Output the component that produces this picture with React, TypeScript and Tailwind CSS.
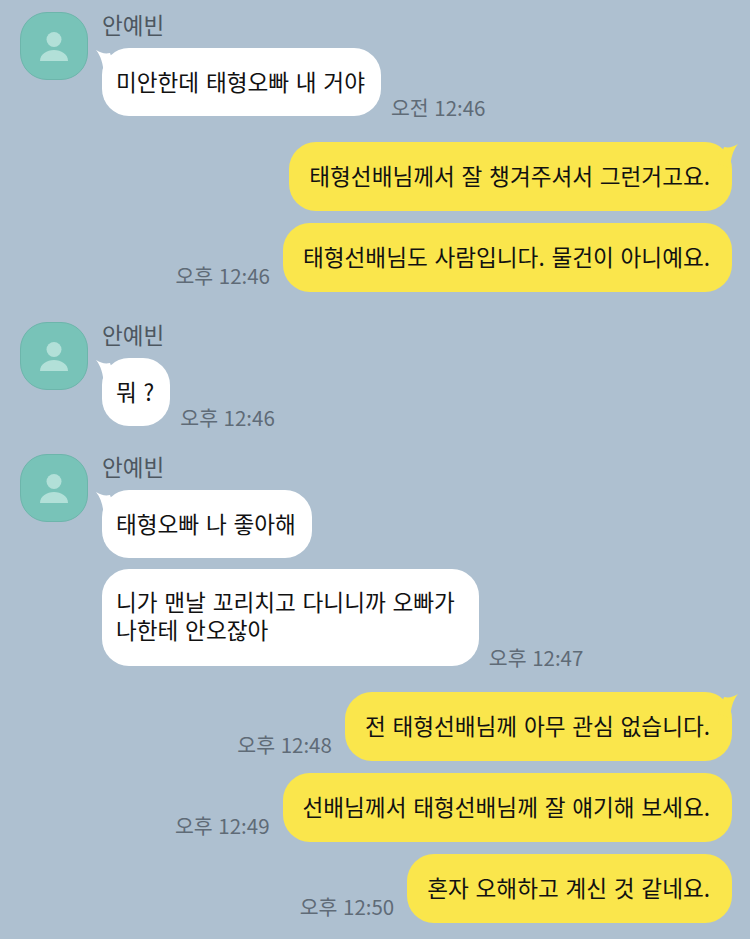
import React from 'react';

const sans = "font-['Noto_Sans_CJK_KR','Noto_Sans',sans-serif]";

function Avatar() {
  return (
    <div className="w-[68px] h-[68px] shrink-0 rounded-[27px] bg-[#78c3b8] border border-[#6db5ab] flex items-center justify-center">
      <svg width="28" height="29" viewBox="0 0 28 29">
        <circle cx="14" cy="7.5" r="7.5" fill="#b2e0d8" />
        <path d="M0 29 C0 22 7 18 14 18 C21 18 28 22 28 29 Z" fill="#b2e0d8" />
      </svg>
    </div>
  );
}

function TheirBubble({ text, time, tail, multiline, className = '' }: { text: React.ReactNode; time?: string; tail?: boolean; multiline?: boolean; className?: string }) {
  return (
    <div className={`flex items-end ${className}`}>
      <div className={`relative bg-white rounded-[27px] pl-[14px] pt-[19px] text-[22.6px] [word-spacing:1.7px] text-[#111] ${multiline ? 'pr-[24px] pb-[22px] leading-[28px]' : 'pr-[16px] pb-[20px] leading-[29px]'}`}>
        {tail && (
          <svg className="absolute left-[-6px] top-[2px]" width="24" height="24" viewBox="0 0 24 24">
            <path d="M0 0 C5 3 9 4 14 3 L20 20 L8 24 C7 14 5 6 0 0 Z" fill="#fff" />
          </svg>
        )}
        {text}
      </div>
      {time && <span className="ml-[10px] mb-[-3px] text-[20.5px] leading-[24px] [word-spacing:1px] text-[#5f6b77] whitespace-nowrap">{time}</span>}
    </div>
  );
}

function MyBubble({ text, time, tail, className = '' }: { text: string; time?: string; tail?: boolean; className?: string }) {
  return (
    <div className={`flex items-end justify-end ${className}`}>
      {time && <span className="mr-[13px] mb-[5px] text-[20.5px] leading-[24px] [word-spacing:1px] text-[#5f6b77] whitespace-nowrap">{time}</span>}
      <div className="relative bg-[#fae64c] rounded-[27px] pl-[20px] pr-[22px] pt-[19px] pb-[21px] text-[22.6px] leading-[29px] [word-spacing:1.7px] text-[#111] whitespace-nowrap">
        {tail && (
          <svg className="absolute right-[-6px] top-[2px]" width="24" height="24" viewBox="0 0 24 24">
            <path d="M24 0 C19 3 15 4 10 3 L4 20 L16 24 C17 14 19 6 24 0 Z" fill="#fae64c" />
          </svg>
        )}
        {text}
      </div>
    </div>
  );
}

function TheirGroup({ children, className = '' }: { children: React.ReactNode; className?: string }) {
  return (
    <div className={`flex gap-[14px] pl-[20px] ${className}`}>
      <Avatar />
      <div className="flex flex-col">
        <div className="h-[36px] text-[22.5px] leading-[28px] mt-[-2px] mb-[2px] text-[#4d5760]">안예빈</div>
        {children}
      </div>
    </div>
  );
}

export default function App() {
  return (
    <div className={`w-[750px] h-[939px] overflow-hidden bg-[#aec0d0] pt-[12px] pr-[18px] ${sans}`}>
      <TheirGroup>
        <TheirBubble tail text="미안한데 태형오빠 내 거야" time="오전 12:46" />
      </TheirGroup>

      <MyBubble tail className="mt-[26px]" text="태형선배님께서 잘 챙겨주셔서 그런거고요." />
      <MyBubble className="mt-[12px]" text="태형선배님도 사람입니다. 물건이 아니예요." time="오후 12:46" />

      <TheirGroup className="mt-[30px]">
        <TheirBubble tail text="뭐 ?" time="오후 12:46" />
      </TheirGroup>

      <TheirGroup className="mt-[28px]">
        <TheirBubble tail text="태형오빠 나 좋아해" />
        <TheirBubble
          multiline
          className="mt-[11px]"
          text={<>니가 맨날 꼬리치고 다니니까 오빠가<br />나한테 안오잖아</>}
          time="오후 12:47"
        />
      </TheirGroup>

      <MyBubble tail className="mt-[26px]" text="전 태형선배님께 아무 관심 없습니다." time="오후 12:48" />
      <MyBubble className="mt-[12px]" text="선배님께서 태형선배님께 잘 얘기해 보세요." time="오후 12:49" />
      <MyBubble className="mt-[12px]" text="혼자 오해하고 계신 것 같네요." time="오후 12:50" />
    </div>
  );
}
